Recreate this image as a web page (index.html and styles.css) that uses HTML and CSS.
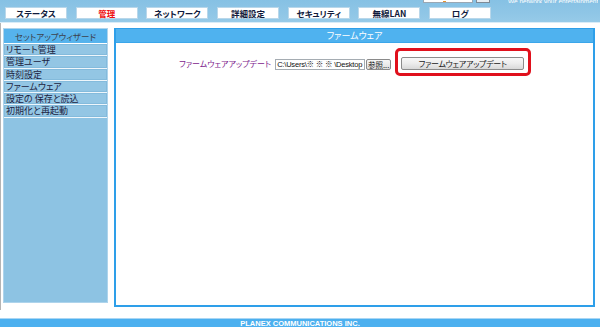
FILE: index.html
```html
<!DOCTYPE html>
<html lang="ja">
<head>
<meta charset="utf-8">
<title>ファームウェア</title>
<link rel="stylesheet" href="styles.css">
</head>
<body>
<header class="top">
  <div class="strip">
    <span class="search"><span class="search-mark"></span></span>
    <span class="go"></span>
    <span class="tagline">We network your entertainment</span>
  </div>
  <nav class="tabs">
    <a class="tab">ステータス</a>
    <a class="tab tab-active">管理</a>
    <a class="tab">ネットワーク</a>
    <a class="tab">詳細設定</a>
    <a class="tab">セキュリティ</a>
    <a class="tab">無線LAN</a>
    <a class="tab">ログ</a>
  </nav>
</header>
<div class="main">
  <aside class="sidebar">
    <div class="side-head">セットアップウィザード</div>
    <div class="side-item">リモート管理</div>
    <div class="side-item">管理ユーザ</div>
    <div class="side-item">時刻設定</div>
    <div class="side-item">ファームウェア</div>
    <div class="side-item">設定の 保存と読込</div>
    <div class="side-item">初期化と再起動</div>
  </aside>
  <section class="panel">
    <div class="panel-head">ファームウェア</div>
    <div class="panel-body">
      <div class="form-row">
        <span class="label">ファームウェアアップデート</span>
        <span class="file-input">C:\Users\※ ※ ※ \Desktop</span>
        <span class="browse">参照...</span>
        <span class="highlight"><span class="update-btn">ファームウェアアップデート</span></span>
      </div>
    </div>
  </section>
</div>
<footer class="footer">PLANEX COMMUNICATIONS INC.</footer>
</body>
</html>
```

FILE: styles.css
```css
html, body {
  margin: 0;
  padding: 0;
}
body {
  width: 600px;
  height: 327px;
  overflow: hidden;
  background: #ffffff;
  font-family: "Noto Sans CJK JP", "Noto Sans", sans-serif;
  font-feature-settings: "palt";
  font-size: 9px;
  color: #1c2340;
}

.top {
  height: 22px;
  background: linear-gradient(180deg, #86c1e4 0%, #8fc6e6 60%, #96cae8 100%);
  border-bottom: 1px solid #d8ecf8;
}
.strip {
  height: 3px;
  overflow: hidden;
  display: flex;
  align-items: flex-end;
  padding-left: 423px;
}
.search {
  flex-shrink: 0;
  width: 50px;
  height: 6px;
  background: #ffffff;
  border: 1px solid #9aa7b3;
  margin-top: -4px;
  display: flex;
  align-items: flex-end;
  padding-left: 19px;
  box-sizing: border-box;
}
.search-mark {
  width: 3px;
  height: 1px;
  background: #e6952f;
}
.go {
  flex-shrink: 0;
  width: 14px;
  height: 6px;
  margin-left: 3px;
  margin-top: -4px;
  background: #e8eef3;
  border: 1px solid #7d8a96;
  box-sizing: border-box;
}
.tagline {
  margin-left: 18px;
  font-family: "Liberation Sans", Arial, sans-serif;
  font-size: 6.5px;
  line-height: 3px;
  height: 3px;
  color: #ffffff;
  white-space: nowrap;
  overflow: hidden;
}

.tabs {
  display: flex;
  gap: 8.7px;
  padding-left: 5px;
  margin-top: 4px;
}
.tab {
  flex-shrink: 0;
  width: 62px;
  height: 12px;
  box-sizing: border-box;
  background: #ffffff;
  border: 1px solid #b9d7ea;
  font-weight: bold;
  font-size: 8.5px;
  line-height: 10px;
  text-align: center;
  color: #101a3c;
}
.tab-active {
  color: #ee1111;
}

.main {
  display: flex;
  align-items: flex-start;
  padding: 5px 5px 0 2px;
  border-left: 1px solid #b4b4b4;
  height: 287px;
  box-sizing: border-box;
}
.sidebar {
  flex-shrink: 0;
  width: 105px;
  height: 275px;
  box-sizing: border-box;
  background: #8dc3e3;
  border: 1px solid #aed4ec;
  display: flex;
  flex-direction: column;
}
.side-head {
  height: 14px;
  background: #56b3ec;
  border-bottom: 1px solid #ffffff;
  text-align: center;
  color: #3c424d;
  font-size: 8.5px;
  line-height: 14px;
}
.side-item {
  height: 11.3px;
  background: #93c6e4;
  border-bottom: 1px solid #eef6fb;
  box-shadow: inset 0 0 0 1px #84bbdc;
  padding-left: 2px;
  font-size: 9px;
  line-height: 11px;
  color: #1b2240;
  white-space: nowrap;
  overflow: hidden;
}

.panel {
  flex-shrink: 0;
  margin-left: 6px;
  width: 481px;
  height: 279px;
  box-sizing: border-box;
  border: 2px solid #2e9fe9;
  border-top-width: 1px;
  background: #ffffff;
  display: flex;
  flex-direction: column;
}
.panel-head {
  height: 13px;
  background: #4fb2ef;
  border-bottom: 1px solid #3aa6ea;
  color: #ffffff;
  text-align: center;
  font-size: 9px;
  line-height: 13px;
}
.panel-body {
  padding-top: 5px;
}
.form-row {
  display: flex;
  align-items: center;
  padding-left: 63px;
}
.label {
  flex-shrink: 0;
  color: #7d1b8c;
  font-size: 8px;
  margin-top: 2px;
  margin-right: 4px;
  white-space: nowrap;
}
.file-input {
  flex-shrink: 0;
  width: 90px;
  height: 11px;
  box-sizing: border-box;
  border: 1px solid #a5acb2;
  margin-top: 4px;
  overflow: hidden;
  white-space: nowrap;
  font-family: "Liberation Sans", "Noto Sans CJK JP", sans-serif;
  font-feature-settings: normal;
  font-variant-emoji: text;
  font-size: 7.5px;
  letter-spacing: -0.2px;
  line-height: 9px;
  padding-left: 1px;
  color: #111111;
}
.browse {
  flex-shrink: 0;
  width: 25px;
  height: 11px;
  box-sizing: border-box;
  margin-left: 1px;
  margin-top: 4px;
  border: 1px solid #8a8a8a;
  border-radius: 2px;
  background: linear-gradient(180deg, #f6f6f6, #dedede);
  font-size: 7.5px;
  line-height: 9px;
  text-align: center;
  color: #222222;
  overflow: hidden;
  white-space: nowrap;
}
.highlight {
  flex-shrink: 0;
  margin-left: 4px;
  border: 3px solid #e0101c;
  border-radius: 5px;
  padding: 6px 4px 3px 3px;
  display: flex;
}
.update-btn {
  flex-shrink: 0;
  width: 123px;
  height: 13px;
  box-sizing: border-box;
  border: 1px solid #8c8c8c;
  border-radius: 2px;
  background: linear-gradient(180deg, #f8f8f8 0%, #ececec 50%, #d9d9d9 100%);
  text-align: center;
  font-size: 8px;
  letter-spacing: -0.3px;
  line-height: 11px;
  color: #1a1a1a;
  white-space: nowrap;
}

.footer {
  margin-top: 8px;
  height: 10px;
  background: #4cb0ef;
  border-top: 1px solid #a9d6f4;
  color: #ffffff;
  font-family: "Liberation Sans", Arial, sans-serif;
  font-weight: bold;
  font-size: 7.5px;
  line-height: 10px;
  text-align: center;
}
```
